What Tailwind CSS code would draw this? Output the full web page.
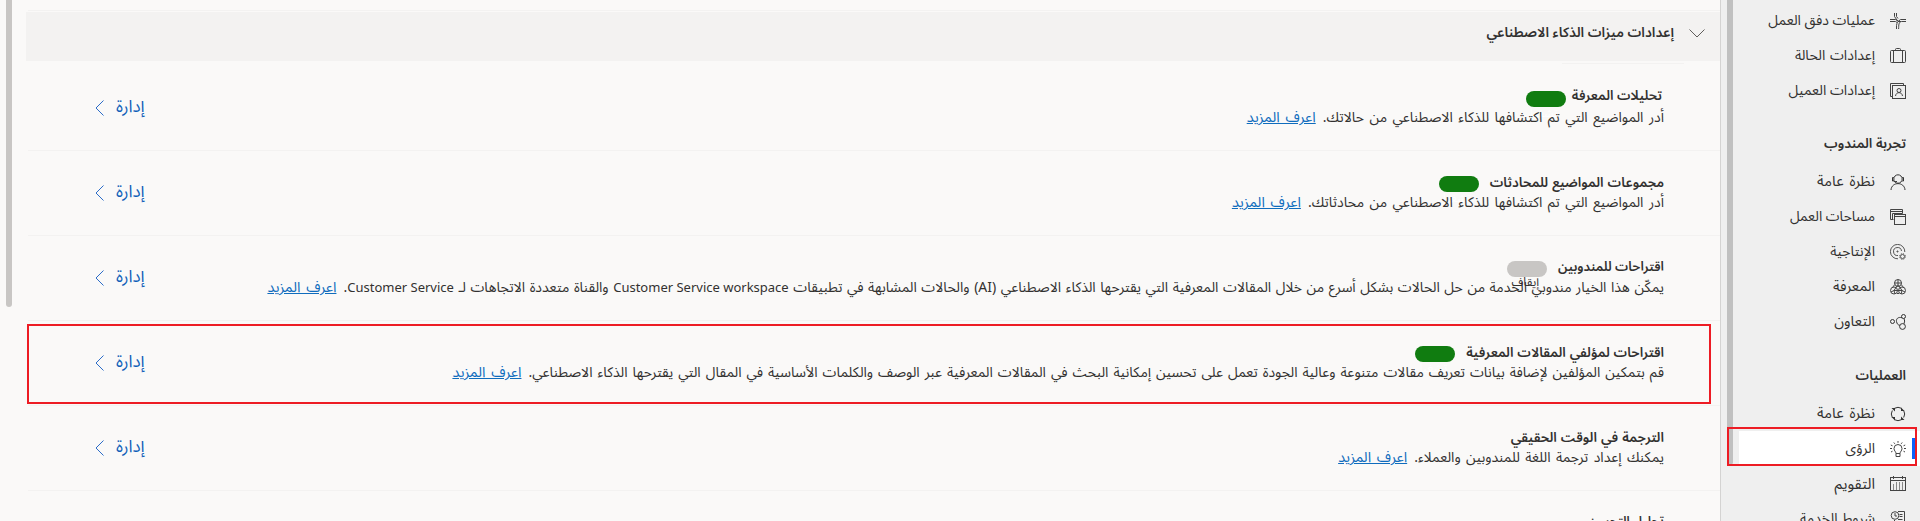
<!DOCTYPE html>
<html lang="ar" dir="rtl">
<head>
<meta charset="utf-8">
<title>الرؤى</title>
<script src="https://cdn.jsdelivr.net/npm/@tailwindcss/browser@4"></script>
</head>
<body class="relative flex h-[521px] w-[1920px] overflow-hidden bg-[#faf9f8] font-['Noto_Sans_Arabic','Open_Sans','Noto_Sans',sans-serif] text-[14px] text-[#323130]">

<!-- Site map -->
<nav class="relative flex h-[521px] w-[200px] shrink-0 flex-col overflow-hidden border-l border-[#d4d3d2] bg-[#efefef] pt-[3px] whitespace-nowrap">
  <div class="absolute top-0 right-[187px] h-[465px] w-[6px] rounded-b bg-[#c0c0c0]"></div>

  <a class="flex h-[35px] shrink-0 items-center gap-[15px] pr-[14px]">
    <svg class="size-4" viewBox="0 0 16 16" fill="none" stroke="#444"><path d="M0 6.500h5.500L8 8M0 8.500h5.500l1.500 1M16 6.500h-5.500L8 8.500M16 8.500h-4.500C8.500 9 8.800 12 8.600 16M4.500 0v3.500L8 8.500h3M6.500 0v3.500l1.500 2M6.500 16v-3.500c.3-3 1.800-4 3-5"/></svg>
    <span class="leading-5">عمليات دفق العمل</span></a>
  <a class="flex h-[35px] shrink-0 items-center gap-[15px] pr-[14px]">
    <svg class="size-4" viewBox="0 0 16 16" fill="none" stroke="#444"><rect x=".5" y="2.500" width="15" height="12" rx="1"/><path d="M5.500 2.500v-1q0-1 1-1h3q1 0 1 1v1M3.500 2.500v12M12.500 2.500v12"/></svg>
    <span class="leading-5 [word-spacing:1px]">إعدادات الحالة</span></a>
  <a class="flex h-[35px] shrink-0 items-center gap-[15px] pr-[14px]">
    <svg class="size-4" viewBox="0 0 16 16" fill="none" stroke="#444"><path d="M2.500 13.500h-2V.5h13v2"/><rect x="2.500" y="2.500" width="13" height="13"/><circle cx="9" cy="7.500" r="2"/><path d="M5.500 13c.5-4.500 6.500-4.500 7 0"/></svg>
    <span class="leading-5">إعدادات العميل</span></a>

  <div class="flex h-[56px] shrink-0 items-center pt-[15px] pr-[14px] text-[13.600px] font-semibold"><span class="leading-5">تجربة المندوب</span></div>

  <a class="flex h-[35px] shrink-0 items-center gap-[15px] pt-px pr-[14px]">
    <svg class="size-4" viewBox="0 0 16 16" fill="none" stroke="#333"><circle cx="8" cy="5" r="4.200"/><path d="M3.800 3.500H2.500v3.500h1.300M12.200 3.500h1.300v3.500h-1.300M3.500 6.500Q4 8.500 7 7.500M1 16c.5-8.500 13.500-8.500 14 0"/></svg>
    <span class="leading-5 text-[14.700px] [word-spacing:2px]">نظرة عامة</span></a>
  <a class="flex h-[35px] shrink-0 items-center gap-[15px] pt-px pr-[14px]">
    <svg class="size-4" viewBox="0 0 16 16" fill="none" stroke="#444"><path d="M3.500 10.500h-3V.5h12v4M.5 2.500h12"/><rect x="4.500" y="5.500" width="11" height="10"/><path d="M2.500 10V4.500h10M4.500 7.500h11"/></svg>
    <span class="leading-5 text-[13.900px]">مساحات العمل</span></a>
  <a class="flex h-[35px] shrink-0 items-center gap-[15px] pt-px pr-[14px]">
    <svg class="size-4" viewBox="0 0 16 16" fill="none" stroke="#555"><path d="M14.800 8A7.200 7.200 0 1 0 8 14.800M11.500 7A4 4 0 1 0 8 11.500"/><circle cx="7.500" cy="7.500" r=".6" fill="#555"/><circle cx="12.500" cy="12.500" r="2"/><circle cx="12.500" cy="12.500" r="2.900" stroke-dasharray="1.200 1.080"/></svg>
    <span class="leading-5">الإنتاجية</span></a>
  <a class="flex h-[35px] shrink-0 items-center gap-[15px] pt-px pr-[14px]">
    <svg class="size-4" viewBox="0 0 16 16" fill="none" stroke="#444"><circle cx="8" cy="4" r="3.500"/><circle cx="4" cy="11.500" r="3.500"/><circle cx="12" cy="11.500" r="3.500"/><path d="M8 .5v5L4 11.500h8l-4-6M4.800 5.500 2 9M11.200 5.500 14 9M1 13l3-1.500L5 15M15 13l-3-1.500-1 3.500M4.500 4h7M7 14.500h2"/></svg>
    <span class="leading-5 text-[14.500px]">المعرفة</span></a>
  <a class="flex h-[35px] shrink-0 items-center gap-[15px] pt-px pr-[14px]">
    <svg class="size-4" viewBox="0 0 16 16" fill="none" stroke="#333"><circle cx="2.500" cy="7.500" r="2"/><circle cx="13.500" cy="2.500" r="2"/><circle cx="12.500" cy="12.500" r="2.900"/><path d="M12 3.800C8 2.500 6 5 6.500 7.500S8 11 9.800 11.300M14 4.500q1.300 2.500 0 5.300"/></svg>
    <span class="leading-5 text-[14.500px]">التعاون</span></a>

  <div class="flex h-[57px] shrink-0 items-center pt-[16px] pr-[14px] text-[13.500px] font-semibold"><span class="leading-5">العمليات</span></div>

  <a class="flex h-[35px] shrink-0 items-center gap-[15px] pr-[14px]">
    <svg class="size-4" viewBox="0 0 16 16" fill="none" stroke="#333"><path d="M4.500 2.300Q8 .3 11.500 2.300M13.700 4.500q2 3.500 0 7M11.500 13.700q-3.500 2-7 0M2.300 11.500q-2-3.500 0-7"/><path fill="#333" stroke="none" d="M1.500 2h3.500v3.500zM11 1.500V5h3.500zM14.500 14H11v-3.500zM5 14.500V11H1.500z"/></svg>
    <span class="leading-5 text-[14.700px] [word-spacing:2px]">نظرة عامة</span></a>
  <a class="ml-[18px] flex h-[35px] shrink-0 items-center gap-[15px] bg-white pr-[14px]">
    <svg class="size-4" viewBox="0 0 16 16" fill="none" stroke="#444"><path d="M6 12.500c0-2-2-2.500-2-5a4 4 0 0 1 8 0c0 2.500-2 3-2 5zM6 12.500v3h4v-3M8 0v1.800M3.800 1.500l1 1.300M12.200 1.500l-1 1.300M.8 4l1.700.8M15.200 4l-1.700.8M0 7.500h2M16 7.500h-2M1 11l1.500-.8M15 11l-1.500-.8"/></svg>
    <span class="leading-5">الرؤى</span></a>
  <a class="flex h-[35px] shrink-0 items-center gap-[15px] pr-[14px]">
    <svg class="size-4" viewBox="0 0 16 16" fill="none" stroke="#444"><rect x=".5" y="1.500" width="15" height="13"/><path d="M0 4.500h16M3.500 0v3M12.500 0v3"/><path stroke="#888" d="M3.500 8v6M6.500 6v8M9.500 6v8M12.500 6v8"/></svg>
    <span class="leading-5 text-[15px]">التقويم</span></a>
  <a class="flex h-[35px] shrink-0 items-center gap-[15px] pr-[14px]">
    <svg class="size-4" viewBox="0 0 16 16" fill="none" stroke="#444"><path d="M8 .5h6.500v12q0 3-2.500 3H4q-2 0-2-3h2.500V9M9.500 3.500h3M9.500 5.500h3M8 8.500h4.500M6.500 11h6"/><circle cx="5" cy="4.500" r="3.800"/><path d="M5 2v3h2"/></svg>
    <span class="leading-5">شروط الخدمة</span></a>

  <div class="absolute top-[438px] right-[4px] h-[21px] w-[4px] bg-[#0b62fb]"></div>
  <div class="absolute top-[427px] right-[3px] h-[39px] w-[190px] border-2 border-[#ed1c24]"></div>
</nav>

<!-- Settings list -->
<main class="relative flex h-[521px] w-[1720px] shrink-0 flex-col overflow-hidden pt-[10px] pl-[26px] whitespace-nowrap">
  <div class="absolute top-0 left-[6px] h-[307px] w-[6px] rounded-b bg-[#c8c6c4]"></div>
  <div class="ml-[2px] h-px shrink-0 bg-[#f3f2f1]"></div>
  <header class="mt-px flex h-[49px] shrink-0 items-center gap-[15px] bg-[#f3f2f1] pr-[15px] pb-[8px]">
    <svg class="mt-[2px] h-[9px] w-4" viewBox="0 0 16 9" fill="none" stroke="#605e5c"><path d="M.5.5 8 8 15.500.5"/></svg>
    <h2 class="text-[13.750px] leading-5 font-semibold">إعدادات ميزات الذكاء الاصطناعي</h2>
  </header>
  <div class="mt-[2px] mr-[36px] h-px w-[122px] shrink-0 bg-[#f3f2f1]"></div>

  <section class="ml-[2px] flex h-[87px] shrink-0 justify-between border-b border-[#f3f2f1] pt-[22px] pr-[56px] pl-[67px]">
    <div>
      <div class="flex gap-[6px] pr-[2px]">
        <h3 class="text-[13.400px] leading-[21px] font-semibold">تحليلات المعرفة</h3>
        <span class="relative mt-[5px] h-4 w-10 rounded-full bg-[#107c10]"><i class="absolute top-[15px] right-[8px] text-[12px] leading-4 text-white not-italic">تشغيل</i></span>
      </div>
      <p class="relative flex gap-[7px] leading-[21px]"><span class="[word-spacing:1.800px]">أدر المواضيع التي تم اكتشافها للذكاء الاصطناعي من حالاتك.</span><a class="text-[14.500px] text-[#0f6cbd] underline [word-spacing:2px]">اعرف المزيد</a></p>
    </div>
    <a class="mt-[10px] flex h-[24px] items-center gap-[12px] text-[17px] text-[#0f5fb8]"><span>إدارة</span><svg class="h-4 w-[9px]" viewBox="0 0 9 16" fill="none" stroke="#2b6cc8"><path d="M8.500.5 1 8l7.500 7.500"/></svg></a>
  </section>

  <section class="ml-[2px] flex h-[85px] shrink-0 justify-between border-b border-[#f3f2f1] pt-[20px] pr-[56px] pl-[67px]">
    <div>
      <div class="flex gap-[11px]">
        <h3 class="h-[21px] text-[13.500px] leading-[23px] font-semibold [word-spacing:0.500px]">مجموعات المواضيع للمحادثات</h3>
        <span class="relative mt-[5px] h-4 w-10 rounded-full bg-[#107c10]"><i class="absolute top-[15px] right-[8px] text-[12px] leading-4 text-white not-italic">تشغيل</i></span>
      </div>
      <p class="relative flex gap-[7px] leading-[21px]"><span class="[word-spacing:1.800px]">أدر المواضيع التي تم اكتشافها للذكاء الاصطناعي من محادثاتك.</span><a class="text-[14.500px] text-[#0f6cbd] underline [word-spacing:2px]">اعرف المزيد</a></p>
    </div>
    <a class="mt-[10px] flex h-[24px] items-center gap-[12px] text-[17px] text-[#0f5fb8]"><span>إدارة</span><svg class="h-4 w-[9px]" viewBox="0 0 9 16" fill="none" stroke="#2b6cc8"><path d="M8.500.5 1 8l7.500 7.500"/></svg></a>
  </section>

  <section class="ml-[2px] flex h-[85px] shrink-0 justify-between border-b border-[#f3f2f1] pt-[20px] pr-[56px] pl-[67px]">
    <div>
      <div class="flex gap-[11px]">
        <h3 class="h-[21px] text-[13.100px] leading-[23px] font-semibold">اقتراحات للمندوبين</h3>
        <span class="relative mt-[5px] h-4 w-10 rounded-full bg-[#c8c6c4]"><i class="absolute top-[14px] right-[8px] text-[12px] leading-4 not-italic">إيقاف</i></span>
      </div>
      <p class="relative flex gap-[7px] leading-[21px]"><span class="[word-spacing:0.930px]">يمكّن هذا الخيار مندوبي الخدمة من حل الحالات بشكل أسرع من خلال المقالات المعرفية التي يقترحها الذكاء الاصطناعي (AI) والحالات المشابهة في تطبيقات <span class="text-[13px] [word-spacing:0px]">Customer Service workspace</span> والقناة متعددة الاتجاهات لـ <span class="text-[13px] [word-spacing:0px]">Customer Service</span>.</span><a class="text-[14.500px] text-[#0f6cbd] underline [word-spacing:2px]">اعرف المزيد</a></p>
    </div>
    <a class="mt-[10px] flex h-[24px] items-center gap-[12px] text-[17px] text-[#0f5fb8]"><span>إدارة</span><svg class="h-4 w-[9px]" viewBox="0 0 9 16" fill="none" stroke="#2b6cc8"><path d="M8.500.5 1 8l7.500 7.500"/></svg></a>
  </section>

  <section class="ml-[2px] flex h-[85px] shrink-0 justify-between border-b border-[#f3f2f1] pt-[20px] pr-[56px] pl-[67px]">
    <div>
      <div class="flex gap-[11px]">
        <h3 class="h-[21px] text-[13.500px] leading-[23px] font-semibold [word-spacing:0.300px]">اقتراحات لمؤلفي المقالات المعرفية</h3>
        <span class="relative mt-[5px] h-4 w-10 rounded-full bg-[#107c10]"><i class="absolute top-[15px] right-[8px] text-[12px] leading-4 text-white not-italic">تشغيل</i></span>
      </div>
      <p class="relative flex gap-[7px] leading-[21px]"><span class="[word-spacing:1.340px]">قم بتمكين المؤلفين لإضافة بيانات تعريف مقالات متنوعة وعالية الجودة تعمل على تحسين إمكانية البحث في المقالات المعرفية عبر الوصف والكلمات الأساسية في المقال التي يقترحها الذكاء الاصطناعي.</span><a class="text-[14.500px] text-[#0f6cbd] underline [word-spacing:2px]">اعرف المزيد</a></p>
    </div>
    <a class="mt-[10px] flex h-[24px] items-center gap-[12px] text-[17px] text-[#0f5fb8]"><span>إدارة</span><svg class="h-4 w-[9px]" viewBox="0 0 9 16" fill="none" stroke="#2b6cc8"><path d="M8.500.5 1 8l7.500 7.500"/></svg></a>
  </section>

  <section class="ml-[2px] flex h-[85px] shrink-0 justify-between border-b border-[#f3f2f1] pt-[20px] pr-[56px] pl-[67px]">
    <div>
      <h3 class="h-[21px] text-[13.600px] leading-[23px] font-semibold [word-spacing:0.500px]">الترجمة في الوقت الحقيقي</h3>
      <p class="flex gap-[7px] leading-[21px]"><span class="[word-spacing:1.800px]">يمكنك إعداد ترجمة اللغة للمندوبين والعملاء.</span><a class="text-[14.500px] text-[#0f6cbd] underline [word-spacing:2px]">اعرف المزيد</a></p>
    </div>
    <a class="mt-[10px] flex h-[24px] items-center gap-[12px] text-[17px] text-[#0f5fb8]"><span>إدارة</span><svg class="h-4 w-[9px]" viewBox="0 0 9 16" fill="none" stroke="#2b6cc8"><path d="M8.500.5 1 8l7.500 7.500"/></svg></a>
  </section>

  <section class="ml-[2px] shrink-0 pt-[20px] pr-[56px]">
    <h3 class="text-[12.500px] leading-[21px] font-semibold">تحليل التحسن</h3>
  </section>

  <div class="absolute top-[324px] left-[27px] h-[80px] w-[1684px] border-2 border-[#ed1c24]"></div>
</main>
</body>
</html>
